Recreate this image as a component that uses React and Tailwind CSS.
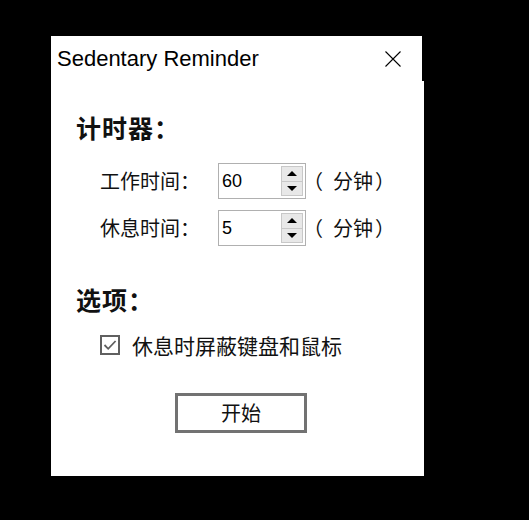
import React, { useState } from 'react';

const cjk = { fontFamily: '"Noto Sans CJK SC", "Noto Sans", sans-serif' };

const SpinBox = ({ value }) => (
  <div className="flex h-[36px] w-[88px] items-stretch border border-[#b0b0b0] bg-white">
    <div
      className="flex flex-1 items-center pl-[3px] text-[18px] leading-none text-black"
      style={{ fontFamily: '"Liberation Sans", Arial, sans-serif' }}
    >
      {value}
    </div>
    <div className="my-[2px] mr-[2px] flex w-[22px] flex-col border border-[#c8c8c8] bg-[#e8e8e8]">
      <div className="flex flex-1 items-center justify-center border-b border-[#c8c8c8]">
        <div className="h-0 w-0 border-x-[5px] border-b-[5px] border-x-transparent border-b-black" />
      </div>
      <div className="flex flex-1 items-center justify-center">
        <div className="h-0 w-0 border-x-[5px] border-t-[5px] border-x-transparent border-t-black" />
      </div>
    </div>
  </div>
);

const TimeRow = ({ label, value }) => (
  <div className="flex h-[36px] items-center pl-[24px] text-[20px] leading-none text-[#111]">
    <span className="w-[118px]">{label}</span>
    <SpinBox value={value} />
    <span className="ml-[-3px] flex items-center">
      <span>（</span>
      <span className="ml-[10px]">分钟</span>
      <span className="ml-[2px]">）</span>
    </span>
  </div>
);

export default function App() {
  const [blockInput, setBlockInput] = useState(true);

  return (
    <div className="h-[520px] w-[529px] bg-black pl-[51px] pt-[36px]">
      <div className="flex flex-col items-start" style={cjk}>
        <div className="flex h-[45px] w-[371px] items-center justify-between bg-white pl-[6px] pr-[21px]">
          <span
            className="text-[22px] leading-none text-black"
            style={{ fontFamily: '"Liberation Sans", Arial, sans-serif' }}
          >
            Sedentary Reminder
          </span>
          <svg width="16" height="16" viewBox="0 0 16 16" className="text-black">
            <path d="M0.5 0.5 L15.5 15.5 M15.5 0.5 L0.5 15.5" stroke="currentColor" strokeWidth="1.1" fill="none" />
          </svg>
        </div>

        <div className="h-[395px] w-[373px] bg-white pl-[25px] pt-[32px]">
          <div className="flex h-[28px] items-center text-[25px] font-bold leading-none tracking-[1px] text-[#111]">计时器：</div>

          <div className="mt-[22px] flex flex-col gap-[11px]">
            <TimeRow label="工作时间：" value="60" />
            <TimeRow label="休息时间：" value="5" />
          </div>

          <div className="mt-[39px] flex h-[28px] items-center text-[25px] font-bold leading-none tracking-[1px] text-[#111]">选项：</div>

          <label className="mt-[21px] flex h-[22px] cursor-pointer items-center pl-[24px] text-[21px] leading-none text-[#111]">
            <span
              className="flex h-[20px] w-[20px] items-center justify-center border-2 border-[#606060] bg-white"
              onClick={() => setBlockInput(!blockInput)}
            >
              {blockInput && (
                <svg width="14" height="12" viewBox="0 0 14 12">
                  <path d="M1.5 6 L5.2 9.8 L12.6 2" stroke="#606060" strokeWidth="1.8" fill="none" />
                </svg>
              )}
            </span>
            <span className="ml-[12px]">休息时屏蔽键盘和鼠标</span>
          </label>

          <button
            className="ml-[99px] mt-[37px] flex h-[40px] w-[132px] items-center justify-center border-[3px] border-[#727272] bg-white text-[20px] leading-none text-[#111]"
            style={cjk}
          >
            开始
          </button>
        </div>
      </div>
    </div>
  );
}
